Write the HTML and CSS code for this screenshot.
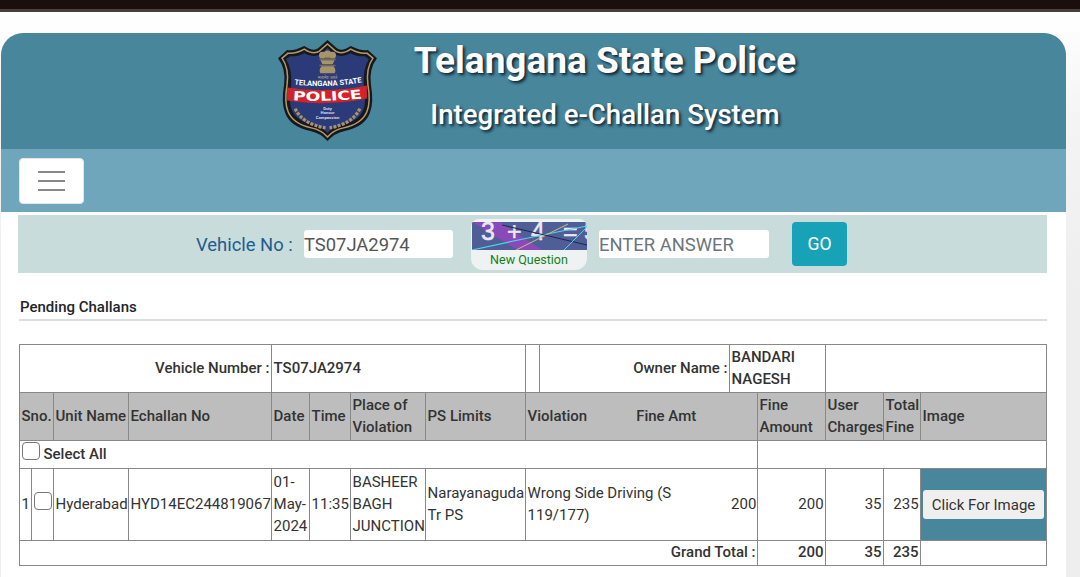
FILE: index.html
```html
<!DOCTYPE html>
<html>
	<head>
		<meta charset="UTF-8">
		<title>Integrated e-Challan System</title>
		<link rel="stylesheet" href="styles.css">
	</head>
	<body>
		<div class="topbar"></div>
		<div class="sheet">
			<div class="banner">
				<svg class="logo" viewBox="0 0 98 100" width="99" height="101">
					<path d="M49 0 L58 8 Q63 12 72 6 Q82 11 89 10 L98 18 Q90 28 92 44 Q95 62 91 72 Q86 86 66 90 Q56 92 49 100 Q42 92 32 90 Q12 86 7 72 Q3 62 6 44 Q8 28 0 18 L9 10 Q16 11 26 6 Q35 12 40 8 Z" fill="#17181c"/>
					<path d="M49 4 L57 11 Q63 15 72 9 Q81 14 88 13 L94 18 Q87 28 89 44 Q92 62 88 71 Q83 83 65 87 Q55 89 49 96 Q43 89 33 87 Q15 83 10 71 Q6 62 9 44 Q11 28 4 18 L10 13 Q17 14 26 9 Q35 15 41 11 Z" fill="none" stroke="#b49a68" stroke-width="1.5"/>
					<path d="M49 8 L56 14 Q63 18 72 13 Q80 17 86 16 L90 19 Q84 28 85 44 Q88 62 84 70 Q80 80 64 84 Q54 86 49 92 Q44 86 34 84 Q18 80 14 70 Q10 62 13 44 Q14 28 8 19 L12 16 Q18 17 26 13 Q35 18 42 14 Z" fill="#2b3a78"/>
					<g fill="#a8946a">
						<circle cx="44" cy="15" r="3.4"/>
						<circle cx="49" cy="14" r="3.6"/>
						<circle cx="54" cy="15" r="3.4"/>
						<rect x="41" y="18" width="16" height="2" fill="#6f6a5c"/>
						<path d="M42 20 H56 L54 24 H44 Z"/>
						<rect x="41" y="24.5" width="16" height="1.5" fill="#6f6a5c"/>
						<path d="M43 26 H55 Q58 30 56 33 H42 Q40 30 43 26 Z"/>
					</g>
					<text class="logo-hindi" x="49" y="38.5" text-anchor="middle">सत्यमेव जयते</text>
					<path id="arc-state" d="M16 44 Q49 48 83 42" fill="none"/>
					<text class="logo-state"><textPath href="#arc-state" startOffset="50%" text-anchor="middle">TELANGANA STATE</textPath></text>
					<path d="M9 47 Q49 53 88 45 L88 58 Q49 66 9 60 Z" fill="#d2232c"/>
					<g transform="translate(49 60) scale(1.38 1)">
						<path id="arc-police" d="M-32 -1 Q0 2 32 -3" fill="none"/>
						<text class="logo-police"><textPath href="#arc-police" startOffset="50%" text-anchor="middle">POLICE</textPath></text>
					</g>
					<text class="logo-motto" x="49" y="69" text-anchor="middle">Duty</text>
					<text class="logo-motto" x="49" y="73.5" text-anchor="middle">Honour</text>
					<text class="logo-motto" x="49" y="78" text-anchor="middle">Compassion</text>
					<path d="M17 68 Q24 83 47 87 M81 68 Q74 83 51 87" fill="none" stroke="#a8946a" stroke-width="3.2" stroke-dasharray="3 1.3"/>
				</svg>
				<div class="titles">
					<h1>Telangana State Police</h1>
					<h2>Integrated e-Challan System</h2>
				</div>
			</div>
			<div class="navbar">
				<button class="toggler"><span></span><span></span><span></span></button>
			</div>
			<div class="searchbar">
				<label class="vehicle-label">Vehicle No :</label>
				<input class="field field-vehicle" type="text" value="TS07JA2974">
				<div class="captcha">
					<svg viewBox="0 0 115 28" width="115" height="28">
						<rect width="115" height="28" fill="#4f5e96"/>
						<path d="M0 0 L28 0 L70 28 L46 28 Z" fill="#8a49b8"/>
						<text class="captcha-text" x="9 35 59 91 112" y="18">3+4=5</text>
						<path d="M0 28 Q50 17 115 4" stroke="#4fd3e8" stroke-width="1.2" fill="none"/>
						<path d="M44 28 L96 2" stroke="#c8c27a" stroke-width="1" fill="none"/>
						<path d="M30 3 L115 23" stroke="#20264a" stroke-width="1" fill="none"/>
						<path d="M92 28 L115 5" stroke="#4fd3e8" stroke-width="1" fill="none"/>
					</svg>
					<a class="new-question">New Question</a>
				</div>
				<input class="field field-answer" type="text" placeholder="ENTER ANSWER">
				<button class="go">GO</button>
			</div>
			<div class="section-title">Pending Challans</div>
			<table class="challans">
				<colgroup>
					<col class="c1"><col class="c2"><col class="c3"><col class="c4"><col class="c5">
					<col class="c6"><col class="c7"><col class="c8"><col class="c9"><col class="c10">
					<col class="c11"><col class="c12"><col class="c13"><col class="c14"><col class="c15">
				</colgroup>
				<tr class="info">
					<th colspan="4" class="right">Vehicle Number :</th>
					<th colspan="4" class="left">TS07JA2974</th>
					<th></th>
					<th class="right">Owner Name :</th>
					<th colspan="2" class="left">BANDARI NAGESH</th>
					<th colspan="3"></th>
				</tr>
				<tr class="head">
					<th colspan="2">Sno.</th>
					<th>Unit Name</th>
					<th>Echallan No</th>
					<th>Date</th>
					<th>Time</th>
					<th>Place of Violation</th>
					<th>PS Limits</th>
					<th colspan="3"><div class="viol-head"><span>Violation</span><span>Fine Amt</span></div></th>
					<th>Fine Amount</th>
					<th>User Charges</th>
					<th>Total Fine</th>
					<th>Image</th>
				</tr>
				<tr class="select-row">
					<th colspan="11" class="left"><label class="select-all"><span class="check"></span>Select All</label></th>
					<td colspan="4"></td>
				</tr>
				<tr class="data">
					<td>1</td>
					<td class="check-cell"><span class="check"></span></td>
					<td>Hyderabad</td>
					<td>HYD14EC244819067</td>
					<td>01-May-2024</td>
					<td>11:35</td>
					<td>BASHEER BAGH JUNCTION</td>
					<td>Narayanaguda Tr PS</td>
					<td colspan="2" class="no-right">Wrong Side Driving (S 119/177)</td>
					<td class="num no-left">200</td>
					<td class="num">200</td>
					<td class="num">35</td>
					<td class="num">235</td>
					<td class="image-cell"><button class="image-btn">Click For Image</button></td>
				</tr>
				<tr class="total">
					<th colspan="11" class="right">Grand Total :</th>
					<th class="right">200</th>
					<th class="right">35</th>
					<th class="right">235</th>
					<th></th>
				</tr>
			</table>
		</div>
	</body>
</html>
```

FILE: styles.css
```css
* {
	box-sizing: border-box;
}
html, body {
	height: 577px;
	overflow: hidden;
}
body {
	margin: 0;
	font-family: Roboto, "Liberation Sans", sans-serif;
	color: #212529;
	background: linear-gradient(#fff 12px, #f4f4f4 120px, #eee 300px);
}
.topbar {
	height: 12px;
	background: #1a0f0c;
	border-bottom: 3px solid #4b3d39;
}
.sheet {
	width: 1065px;
	height: 565px;
	margin: 21px 0 0 1px;
	background: #fff;
	border-radius: 22px 22px 0 0;
}

/* banner */
.banner {
	display: flex;
	height: 116px;
	padding: 7px 0 0 277px;
	background: #47869b;
	border-radius: 22px 22px 0 0;
}
.logo {
	flex: none;
}
.logo text {
	font-family: Roboto, sans-serif;
	font-weight: 700;
	fill: #fff;
}
.logo .logo-hindi {
	font-family: "Noto Sans", sans-serif;
	font-size: 4px;
	font-weight: 400;
	fill: #b9ad8c;
}
.logo .logo-state {
	font-size: 7.4px;
}
.logo .logo-police {
	font-family: "DejaVu Sans", sans-serif;
	font-size: 12.5px;
	font-weight: 700;
}
.logo .logo-motto {
	font-size: 4.2px;
	fill: #d8d8e8;
}
.titles {
	width: 460px;
	margin-left: -2px;
	text-align: center;
	color: #fff;
	text-shadow: 2px 2px 3px #123;
}
.titles h1 {
	margin: 0;
	font-size: 37px;
	line-height: 42px;
	font-weight: 700;
}
.titles h2 {
	margin: 17px 0 0;
	font-size: 27.6px;
	line-height: 32px;
	font-weight: 500;
}

/* nav */
.navbar {
	height: 63px;
	padding: 9px 0 0 18px;
	background: #6fa6bb;
}
.toggler {
	display: flex;
	flex-direction: column;
	justify-content: center;
	gap: 7px;
	width: 65px;
	height: 46px;
	padding: 0 18px;
	border: 1px solid #e6e6e6;
	border-radius: 4px;
	background: #fff;
}
.toggler span {
	display: block;
	height: 2px;
	background: #888;
}

/* search */
.searchbar {
	display: flex;
	align-items: center;
	width: 1029px;
	height: 58px;
	margin: 3px 0 0 17px;
	padding-left: 178px;
	background: #c9dcdc;
}
.vehicle-label {
	width: 108px;
	font-size: 18.4px;
	color: #1f5c8f;
}
.field {
	height: 28px;
	padding: 0;
	border: 0;
	border-radius: 3px;
	background: #fff;
	font-family: inherit;
	font-size: 18.4px;
	color: #555;
}
.field::placeholder {
	color: #6c757d;
	opacity: 1;
}
.field-vehicle {
	width: 149px;
}
.captcha {
	display: flex;
	flex-direction: column;
	align-items: center;
	width: 116px;
	height: 51px;
	margin: 1px 0 0 18px;
	padding-top: 3px;
	background: #eef2f2;
	border-radius: 8px 8px 12px 12px;
	overflow: hidden;
}
.captcha svg {
	display: block;
	flex: none;
}
.captcha-text {
	font-family: "Liberation Sans", sans-serif;
	font-size: 25px;
	fill: #e8e8f4;
	stroke: #e8e8f4;
	stroke-width: 0.5;
}
.new-question {
	font-size: 12.5px;
	line-height: 20px;
	color: #128017;
}
.field-answer {
	width: 170px;
	margin-left: 12px;
}
.go {
	width: 55px;
	height: 44px;
	margin-left: 23px;
	border: 0;
	border-radius: 4px;
	background: #17a2b8;
	color: #fff;
	font-family: inherit;
	font-size: 17.6px;
}

/* table */
.section-title {
	width: 1028px;
	height: 48px;
	margin: 0 0 23px 18px;
	padding: 24px 0 0 1px;
	border-bottom: 2px solid #ddd;
	font-size: 15px;
	line-height: 20px;
	font-weight: 500;
}
.challans {
	width: 1027px;
	margin-left: 18px;
	border-collapse: collapse;
	table-layout: fixed;
	font-size: 15px;
	line-height: 22px;
}
.challans th, .challans td {
	padding: 0 1.5px 2px;
	border: 1px solid #888;
	text-align: left;
	font-weight: 400;
	color: #333;
}
.challans th {
	font-weight: 500;
}
.c1 { width: 12px; }
.c2 { width: 22px; }
.c3 { width: 75px; }
.c4 { width: 143px; }
.c5 { width: 38px; }
.c6 { width: 41px; }
.c7 { width: 75px; }
.c8 { width: 100px; }
.c9 { width: 14px; }
.c10 { width: 190px; }
.c11 { width: 28px; }
.c12 { width: 68px; }
.c13 { width: 58px; }
.c14 { width: 37px; }
.c15 { width: 126px; }
.challans .right {
	text-align: right;
}
.challans .left {
	text-align: left;
}
.info {
	height: 48px;
}
.head {
	height: 48px;
}
.head th {
	background: #bdbdbd;
}
.viol-head {
	display: flex;
	gap: 49px;
}
.select-row {
	height: 28px;
}
.select-all {
	display: flex;
	align-items: center;
	gap: 4px;
}
.select-all .check {
	margin-bottom: 5px;
}
.check {
	display: block;
	width: 18px;
	height: 18px;
	border: 1px solid #777;
	border-radius: 4px;
	background: #fff;
}
.data {
	height: 72px;
}
.check-cell .check {
	margin-bottom: 6px;
}
.challans .num {
	text-align: right;
}
.challans .no-right {
	border-right: 0;
}
.challans .no-left {
	border-left: 0;
}
.challans .image-cell {
	background: #47869b;
	padding-bottom: 0;
	text-align: center;
}
.image-btn {
	width: 121px;
	height: 29px;
	padding: 0;
	border: 0;
	border-radius: 3px;
	background: #efefef;
	font-family: inherit;
	font-size: 15px;
	color: #333;
}
.total {
	height: 25px;
}
```
